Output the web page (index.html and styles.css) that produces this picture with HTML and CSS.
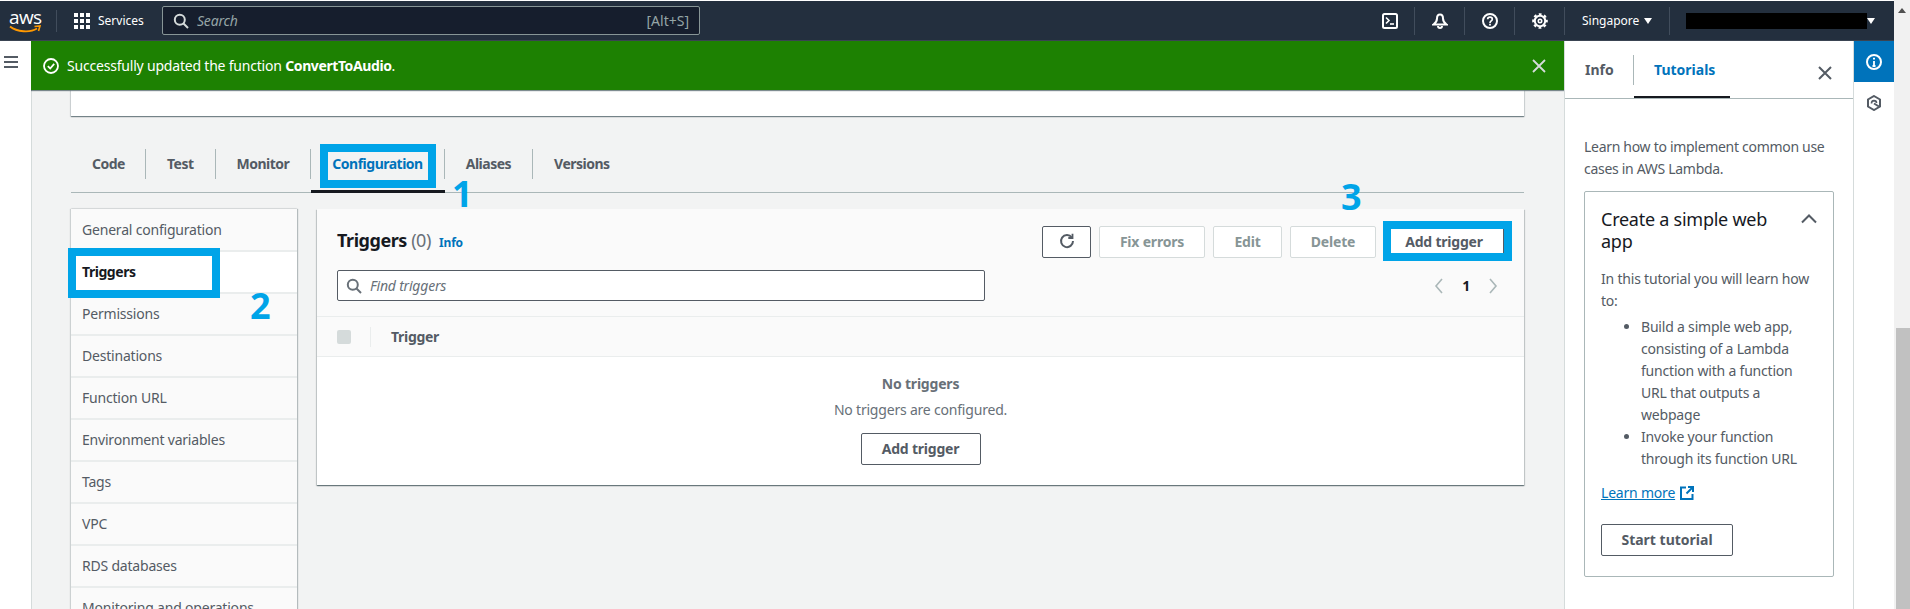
FILE: index.html
```html
<!DOCTYPE html>
<html lang="en">
<head>
    <meta charset="UTF-8">
    <meta name="viewport" content="width=device-width, initial-scale=1.0">
    <title>ConvertToAudio - Lambda</title>
    <link rel="stylesheet" href="styles.css">
</head>
<body>
<div class="page">
    <div class="app">
        <header class="topbar">
            <div class="aws-logo">
                <span class="aws-word">aws</span>
                <svg class="aws-smile" viewBox="0 0 32 9" width="32" height="9"><path d="M1 1.500C8 7 21 8 28 3.500" fill="none" stroke="#ff9900" stroke-width="1.800"/><path d="M25.500 1.500L31 1l-1.500 5" fill="none" stroke="#ff9900" stroke-width="1.600"/></svg>
            </div>
            <div class="services">
                <svg class="grid-icon" viewBox="0 0 16 16" width="16" height="16"><g fill="#fff"><rect width="4" height="4"/><rect x="6" width="4" height="4"/><rect x="12" width="4" height="4"/><rect y="6" width="4" height="4"/><rect x="6" y="6" width="4" height="4"/><rect x="12" y="6" width="4" height="4"/><rect y="12" width="4" height="4"/><rect x="6" y="12" width="4" height="4"/><rect x="12" y="12" width="4" height="4"/></g></svg>
                <span>Services</span>
            </div>
            <div class="top-search">
                <svg viewBox="0 0 16 16" width="16" height="16"><circle cx="6.800" cy="6.800" r="5" fill="none" stroke="#d5dbdb" stroke-width="2"/><path d="M10.500 10.500L15 15" stroke="#d5dbdb" stroke-width="2"/></svg>
                <span class="top-search-text">Search</span>
                <span class="top-search-key">[Alt+S]</span>
            </div>
            <div class="top-right">
                <div class="top-icon">
                    <svg viewBox="0 0 16 16" width="16" height="16" fill="none" stroke="#fff" stroke-width="2"><rect x="1" y="1" width="14" height="14" rx="1.500"/><path d="M4 4.500L7 7.500L4 10.500" stroke-width="1.600"/><path d="M8 11h4" stroke-width="1.600"/></svg>
                </div>
                <div class="top-icon">
                    <svg viewBox="0 0 16 16" width="16" height="16" fill="none" stroke="#fff" stroke-width="2"><path d="M8 1.500C5.500 1.500 5 3.500 5 5.500C5 8.500 3.500 10 1.500 11.500h13C12.500 10 11 8.500 11 5.500C11 3.500 10.500 1.500 8 1.500Z"/><path d="M6 13a2 2 0 0 0 4 0"/></svg>
                </div>
                <div class="top-icon">
                    <svg viewBox="0 0 16 16" width="16" height="16" fill="none" stroke="#fff" stroke-width="2"><circle cx="8" cy="8" r="7"/><path d="M5.700 6.200C5.700 3.500 10.300 3.500 10.300 6.200C10.300 8 8 7.900 8 10" stroke-width="1.700"/><path d="M8 10.800v1.800" stroke-width="1.800"/></svg>
                </div>
                <div class="top-icon">
                    <svg viewBox="0 0 16 16" width="16" height="16" fill="none" stroke="#fff"><circle cx="8" cy="8" r="5.200" stroke-width="2"/><circle cx="8" cy="8" r="6.800" stroke-width="2" stroke-dasharray="2.800 2.540" stroke-dashoffset="1.400"/><circle cx="8" cy="8" r="1.700" stroke-width="1.600"/></svg>
                </div>
                <div class="top-menu region">Singapore <i class="caret"></i></div>
                <div class="top-menu account"><span class="redacted"></span><i class="caret"></i></div>
            </div>
        </header>

        <div class="workspace">
            <div class="nav-rail">
                <svg viewBox="0 0 14 12" width="14" height="12"><path d="M0 1h14M0 6h14M0 11h14" stroke="#545b64" stroke-width="2"/></svg>
            </div>

            <main class="main">
                <div class="flash">
                    <svg viewBox="0 0 16 16" width="16" height="16" fill="none" stroke="#fff" stroke-width="1.800"><circle cx="8" cy="8" r="7"/><path d="M4.800 8.200L7.200 10.500L11.200 5.800"/></svg>
                    <span class="flash-text">Successfully updated the function <b>ConvertToAudio</b>.</span>
                    <svg class="flash-close" viewBox="0 0 14 14" width="14" height="14"><path d="M1 1l12 12M13 1L1 13" stroke="#d5dbdb" stroke-width="1.800"/></svg>
                </div>

                <div class="content">
                    <div class="top-card"></div>

                    <div class="tabs">
                        <a class="tab">Code</a>
                        <a class="tab">Test</a>
                        <a class="tab">Monitor</a>
                        <a class="tab active">Configuration</a>
                        <a class="tab">Aliases</a>
                        <a class="tab">Versions</a>
                    </div>

                    <div class="config">
                        <ul class="side-list">
                            <li>General configuration</li>
                            <li class="current">Triggers</li>
                            <li>Permissions</li>
                            <li>Destinations</li>
                            <li>Function URL</li>
                            <li>Environment variables</li>
                            <li>Tags</li>
                            <li>VPC</li>
                            <li>RDS databases</li>
                            <li>Monitoring and operations</li>
                        </ul>

                        <section class="panel">
                            <div class="panel-head">
                                <div class="panel-row">
                                    <h2>Triggers <span class="count">(0)</span> <a class="info-link">Info</a></h2>
                                    <div class="actions">
                                        <button class="btn refresh">
                                            <svg viewBox="0 0 16 16" width="16" height="16" fill="none" stroke="#545b64" stroke-width="2"><path d="M12.800 4.500A6 6 0 1 0 14 8"/><path d="M13.500 0.800V5H9.300" stroke-width="1.800"/></svg>
                                        </button>
                                        <button class="btn off fix">Fix errors</button>
                                        <button class="btn off edit">Edit</button>
                                        <button class="btn off del">Delete</button>
                                        <button class="btn add">Add trigger</button>
                                    </div>
                                </div>
                                <div class="panel-row second">
                                    <div class="find">
                                        <svg viewBox="0 0 16 16" width="16" height="16"><circle cx="6.800" cy="6.800" r="5" fill="none" stroke="#687078" stroke-width="2"/><path d="M10.500 10.500L15 15" stroke="#687078" stroke-width="2"/></svg>
                                        <span>Find triggers</span>
                                    </div>
                                    <div class="pager">
                                        <svg viewBox="0 0 10 16" width="10" height="16"><path d="M8 1L2 8l6 7" fill="none" stroke="#aab7b8" stroke-width="1.600"/></svg>
                                        <b>1</b>
                                        <svg viewBox="0 0 10 16" width="10" height="16"><path d="M2 1l6 7-6 7" fill="none" stroke="#aab7b8" stroke-width="1.600"/></svg>
                                    </div>
                                </div>
                            </div>
                            <div class="table-head">
                                <span class="check"></span>
                                <span class="col-sep"></span>
                                <b>Trigger</b>
                            </div>
                            <div class="empty">
                                <b>No triggers</b>
                                <p>No triggers are configured.</p>
                                <button class="btn plain">Add trigger</button>
                            </div>
                        </section>
                    </div>
                </div>
            </main>

            <aside class="help">
                <div class="help-tabs">
                    <a class="help-tab">Info</a>
                    <a class="help-tab active">Tutorials</a>
                    <svg class="help-close" viewBox="0 0 14 14" width="14" height="14"><path d="M1 1l12 12M13 1L1 13" stroke="#545b64" stroke-width="2"/></svg>
                </div>
                <div class="help-body">
                    <p class="help-intro">Learn how to implement common use cases in AWS Lambda.</p>
                    <div class="tutorial">
                        <div class="tutorial-head">
                            <h3>Create a simple web app</h3>
                            <svg viewBox="0 0 16 10" width="16" height="10"><path d="M1 8.500L8 1.500L15 8.500" fill="none" stroke="#545b64" stroke-width="2"/></svg>
                        </div>
                        <p>In this tutorial you will learn how to:</p>
                        <ul>
                            <li>Build a simple web app, consisting of a Lambda function with a function URL that outputs a webpage</li>
                            <li>Invoke your function through its function URL</li>
                        </ul>
                        <a class="learn"><span>Learn more</span>
                            <svg viewBox="0 0 14 14" width="14" height="14" fill="none" stroke="#0073bb" stroke-width="2"><path d="M6 1.500H1V13h11.500V8"/><path d="M13 1L6.500 7.500"/><path d="M8 1h5v5"/></svg>
                        </a>
                        <button class="btn start">Start tutorial</button>
                    </div>
                </div>
            </aside>

            <div class="tool-rail">
                <div class="tool on">
                    <svg viewBox="0 0 16 16" width="16" height="16" fill="none" stroke="#fff" stroke-width="2"><circle cx="8" cy="8" r="7"/><path d="M8 7v5M6.500 12h3" stroke-width="1.800"/><path d="M8 3.800v1.800" stroke-width="2"/></svg>
                </div>
                <div class="tool">
                    <svg viewBox="0 0 16 16" width="16" height="16" fill="none" stroke="#545b64" stroke-width="2"><path d="M8 1L14 4.500V11.500L8 15L2 11.500V4.500Z"/><path d="M5.500 8.500A2.800 2.800 0 0 1 8 5.600C9.500 5.600 10.500 6.800 10.500 8" stroke-width="1.600"/><path d="M8 8.500L13 11.500" stroke-width="2"/></svg>
                </div>
            </div>
        </div>
    </div>

    <div class="scrollbar">
        <i class="scroll-up"></i>
        <div class="scroll-thumb"></div>
    </div>

    <!-- blue callouts drawn on top of the page -->
    <div class="mark box-1"></div>
    <div class="mark box-2"></div>
    <div class="mark box-3"></div>
    <span class="mark-num num-1">1</span>
    <span class="mark-num num-2">2</span>
    <span class="mark-num num-3">3</span>
</div>
</body>
</html>
```

FILE: styles.css
```css
* {
    box-sizing: border-box;
}

html, body {
    margin: 0;
    padding: 0;
    height: 100%;
    overflow: hidden;
}

body {
    font-family: "Noto Sans", sans-serif;
    font-size: 14px;
    line-height: 22px;
    letter-spacing: -0.2px;
    color: #16191f;
    background: #fff;
}

.page {
    position: relative;
    display: flex;
    height: 609px;
    overflow: hidden;
}

.app {
    flex: 1;
    min-width: 0;
    display: flex;
    flex-direction: column;
    padding-top: 1px;
}

/* top bar */
.topbar {
    height: 40px;
    flex: none;
    display: flex;
    align-items: center;
    background: #232f3e;
    color: #fff;
    border-bottom: 1px solid #3a4452;
}

.aws-logo {
    width: 57px;
    height: 22px;
    padding-left: 9px;
    position: relative;
    border-right: 1px solid #414d5c;
}

.aws-word {
    display: block;
    font-family: "Open Sans", sans-serif;
    font-size: 19px;
    line-height: 16px;
    letter-spacing: -0.6px;
    margin-top: -1px;
}

.aws-smile {
    display: block;
}

.services {
    display: flex;
    align-items: center;
    gap: 8px;
    margin-left: 17px;
    width: 88px;
    font-size: 12px;
    letter-spacing: 0;
}

.grid-icon {
    flex: none;
}

.top-search {
    width: 538px;
    height: 29px;
    display: flex;
    align-items: center;
    padding: 0 10px;
    gap: 8px;
    background: #161e2d;
    border: 1px solid #879596;
    border-radius: 2px;
    color: #95a5a6;
}

.top-search-text {
    font-style: italic;
    flex: 1;
}

.top-search-key {
    letter-spacing: 0;
}

.top-right {
    margin-left: auto;
    display: flex;
    align-items: center;
    height: 28px;
}

.top-icon {
    width: 50px;
    height: 28px;
    display: flex;
    align-items: center;
    justify-content: center;
    border-right: 1px solid #414d5c;
}

.top-menu {
    display: flex;
    align-items: center;
    height: 28px;
    font-size: 12px;
    letter-spacing: 0;
}

.region {
    width: 105px;
    padding-left: 17px;
    gap: 5px;
    border-right: 1px solid #414d5c;
}

.account {
    width: 224px;
    padding-left: 16px;
}

.redacted {
    width: 181px;
    height: 16px;
    background: #000;
}

.caret {
    width: 0;
    height: 0;
    border-left: 4px solid transparent;
    border-right: 4px solid transparent;
    border-top: 6px solid #fff;
}

/* page columns */
.workspace {
    flex: 1;
    min-height: 0;
    display: grid;
    grid-template-columns: 31px 1533px 290px 40px;
}

.nav-rail {
    padding: 15px 0 0 4px;
    background: #fff;
}

.nav-rail svg {
    display: block;
}

.main {
    background: #f2f3f3;
    box-shadow: inset 1px 0 0 #d5dbdb;
    overflow: hidden;
}

.flash {
    height: 49px;
    display: flex;
    align-items: center;
    padding: 0 18px 0 12px;
    gap: 8px;
    background: #1d8102;
    color: #fff;
    box-shadow: 0 1px 1px rgba(0, 28, 36, 0.5);
    position: relative;
}

.flash-text {
    flex: 1;
}

.flash-text b {
    letter-spacing: -0.4px;
}

.content {
    padding: 0 40px;
}

.top-card {
    height: 26px;
    background: #fff;
    box-shadow: 0 1px 1px 0 rgba(0, 28, 36, 0.4), 1px 1px 1px 0 rgba(0, 28, 36, 0.1), -1px 1px 1px 0 rgba(0, 28, 36, 0.1);
}

/* tabs */
.tabs {
    margin-top: 33px;
    padding-bottom: 13px;
    display: flex;
    border-bottom: 1px solid #aab7b8;
}

.tab {
    position: relative;
    height: 30px;
    line-height: 30px;
    padding: 0 21px;
    font-weight: 700;
    letter-spacing: -0.5px;
    color: #545b64;
    border-left: 1px solid #aab7b8;
}

.tab:first-child {
    border-left: 0;
    padding-right: 20px;
}

.tab.active {
    color: #0073bb;
}

.tab.active::after {
    content: "";
    position: absolute;
    left: 0;
    right: -1px;
    bottom: -14px;
    height: 3px;
    background: #16191f;
}

.config {
    margin-top: 16px;
    display: grid;
    grid-template-columns: 226px 1fr;
    gap: 20px;
    align-items: start;
}

/* left list */
.side-list {
    list-style: none;
    margin: 0;
    padding: 1px 0 0;
    background: #fafafa;
    box-shadow: 1px 0 1px rgba(0, 28, 36, 0.25), -1px 0 1px rgba(0, 28, 36, 0.15), 0 -1px 1px rgba(0, 28, 36, 0.05);
}

.side-list li {
    height: 42px;
    padding: 9px 11px;
    border-bottom: 2px solid #eaeded;
    color: #545b64;
}

.side-list li.current {
    background: #fff;
    color: #16191f;
    font-weight: 700;
    letter-spacing: -0.45px;
}

/* triggers panel */
.panel {
    background: #fff;
    box-shadow: 0 1px 1px 0 rgba(0, 28, 36, 0.4), 1px 1px 1px 0 rgba(0, 28, 36, 0.15), -1px 1px 1px 0 rgba(0, 28, 36, 0.15);
}

.panel-head {
    height: 108px;
    padding: 16px 20px 0;
    background: #fafafa;
    border-bottom: 1px solid #eaeded;
}

.panel-row {
    display: flex;
    justify-content: space-between;
    align-items: center;
}

.panel-row.second {
    margin-top: 12px;
}

h2 {
    margin: 0;
    font-size: 18px;
    font-weight: 700;
    line-height: 30px;
    letter-spacing: -0.45px;
}

.count {
    font-weight: 400;
    color: #687078;
}

.info-link {
    margin-left: 4px;
    font-size: 12px;
    letter-spacing: -0.2px;
    color: #0073bb;
    font-weight: 700;
}

.actions {
    display: flex;
    gap: 8px;
}

.btn {
    height: 32px;
    font-family: inherit;
    font-size: 14px;
    font-weight: 700;
    letter-spacing: -0.2px;
    line-height: 20px;
    padding: 0;
    color: #545b64;
    background: #fff;
    border: 1px solid #545b64;
    border-radius: 2px;
}

.refresh {
    width: 49px;
    padding-top: 3px;
}

.btn.off {
    color: #879596;
    border-color: #d5dbdb;
}

.fix {
    width: 106px;
}

.edit {
    width: 69px;
}

.del {
    width: 86px;
}

.add {
    width: 120px;
}

.find {
    width: 648px;
    height: 31px;
    display: flex;
    align-items: center;
    gap: 8px;
    padding: 0 8px;
    background: #fff;
    border: 1px solid #545b64;
    border-radius: 2px;
    font-style: italic;
    color: #687078;
}

.pager {
    display: flex;
    align-items: center;
    gap: 18px;
    padding-right: 6px;
}

.pager b {
    color: #16191f;
}

.table-head {
    height: 40px;
    display: flex;
    align-items: center;
    padding-left: 20px;
    background: #fafafa;
    border-bottom: 1px solid #eaeded;
    color: #545b64;
}

.table-head b {
    letter-spacing: -0.3px;
}

.check {
    width: 14px;
    height: 14px;
    background: #d5dbdb;
    border-radius: 2px;
}

.col-sep {
    width: 1px;
    height: 20px;
    margin: 0 20px 0 19px;
    background: #eaeded;
}

.empty {
    height: 128px;
    padding-top: 16px;
    display: flex;
    flex-direction: column;
    align-items: center;
    color: #687078;
}

.empty p {
    margin: 4px 0 0;
}

.plain {
    width: 120px;
    margin-top: 12px;
}

/* help panel */
.help {
    background: #fff;
    border-left: 1px solid #d5dbdb;
    border-right: 1px solid #d5dbdb;
}

.help-tabs {
    position: relative;
    height: 58px;
    padding-top: 14px;
    display: flex;
    border-bottom: 1px solid #aab7b8;
}

.help-tab {
    height: 30px;
    line-height: 30px;
    font-weight: 700;
    color: #545b64;
    padding-left: 20px;
    width: 68px;
    letter-spacing: 0;
}

.help-tab.active {
    position: relative;
    color: #0073bb;
    border-left: 1px solid #aab7b8;
    width: 97px;
}

.help-tab.active::after {
    content: "";
    position: absolute;
    left: 0;
    right: 0;
    top: 41px;
    height: 2px;
    background: #16191f;
}

.help-close {
    position: absolute;
    left: 253px;
    top: 25px;
}

.help-body {
    padding: 37px 19px 0 19px;
    letter-spacing: -0.2px;
    color: #545b64;
}

.help-intro {
    margin: 0 0 11px;
    letter-spacing: -0.3px;
}

.tutorial {
    padding: 16px;
    padding-bottom: 20px;
    border: 1px solid #aab7b8;
    border-radius: 2px;
    height: 386px;
}

.tutorial-head {
    display: flex;
    justify-content: space-between;
    align-items: flex-start;
    margin-bottom: 16px;
}

.tutorial-head svg {
    margin: 6px 0 0;
}

h3 {
    margin: 0;
    width: 190px;
    font-size: 18px;
    font-weight: 400;
    line-height: 22px;
    letter-spacing: -0.25px;
    color: #16191f;
}

.tutorial p {
    margin: 0;
}

.tutorial ul {
    margin: 4px 0 12px;
    padding-left: 40px;
}

.learn {
    display: flex;
    align-items: center;
    gap: 5px;
    color: #0073bb;
}

.learn span {
    text-decoration: underline;
}

.start {
    display: block;
    width: 132px;
    margin-top: 20px;
    letter-spacing: 0;
}

/* right tool strip */
.tool-rail {
    background: #fff;
}

.tool {
    height: 41px;
    display: flex;
    align-items: center;
    justify-content: center;
}

.tool.on {
    background: #0073bb;
}

/* browser scrollbar */
.scrollbar {
    position: relative;
    width: 16px;
    flex: none;
    background: #f1f1f1;
}

.scroll-up {
    position: absolute;
    left: 4px;
    top: 8px;
    width: 0;
    height: 0;
    border-left: 4px solid transparent;
    border-right: 4px solid transparent;
    border-bottom: 5px solid #505050;
}

.scroll-thumb {
    position: absolute;
    left: 2px;
    right: 0;
    top: 328px;
    bottom: 0;
    background: #c1c1c1;
}

/* callouts */
.mark {
    position: absolute;
    border: 8px solid #00a4e8;
}

.box-1 {
    left: 320px;
    top: 144px;
    width: 116px;
    height: 44px;
}

.box-2 {
    left: 68px;
    top: 248px;
    width: 152px;
    height: 50px;
}

.box-3 {
    left: 1383px;
    top: 221px;
    width: 129px;
    height: 40px;
}

.mark-num {
    position: absolute;
    font-family: "Open Sans", sans-serif;
    font-size: 36px;
    font-weight: 700;
    line-height: 36px;
    letter-spacing: 0;
    color: #00a4e8;
}

.num-1 {
    left: 452px;
    top: 176px;
}

.num-2 {
    left: 250px;
    top: 288px;
}

.num-3 {
    left: 1341px;
    top: 179px;
}
```
